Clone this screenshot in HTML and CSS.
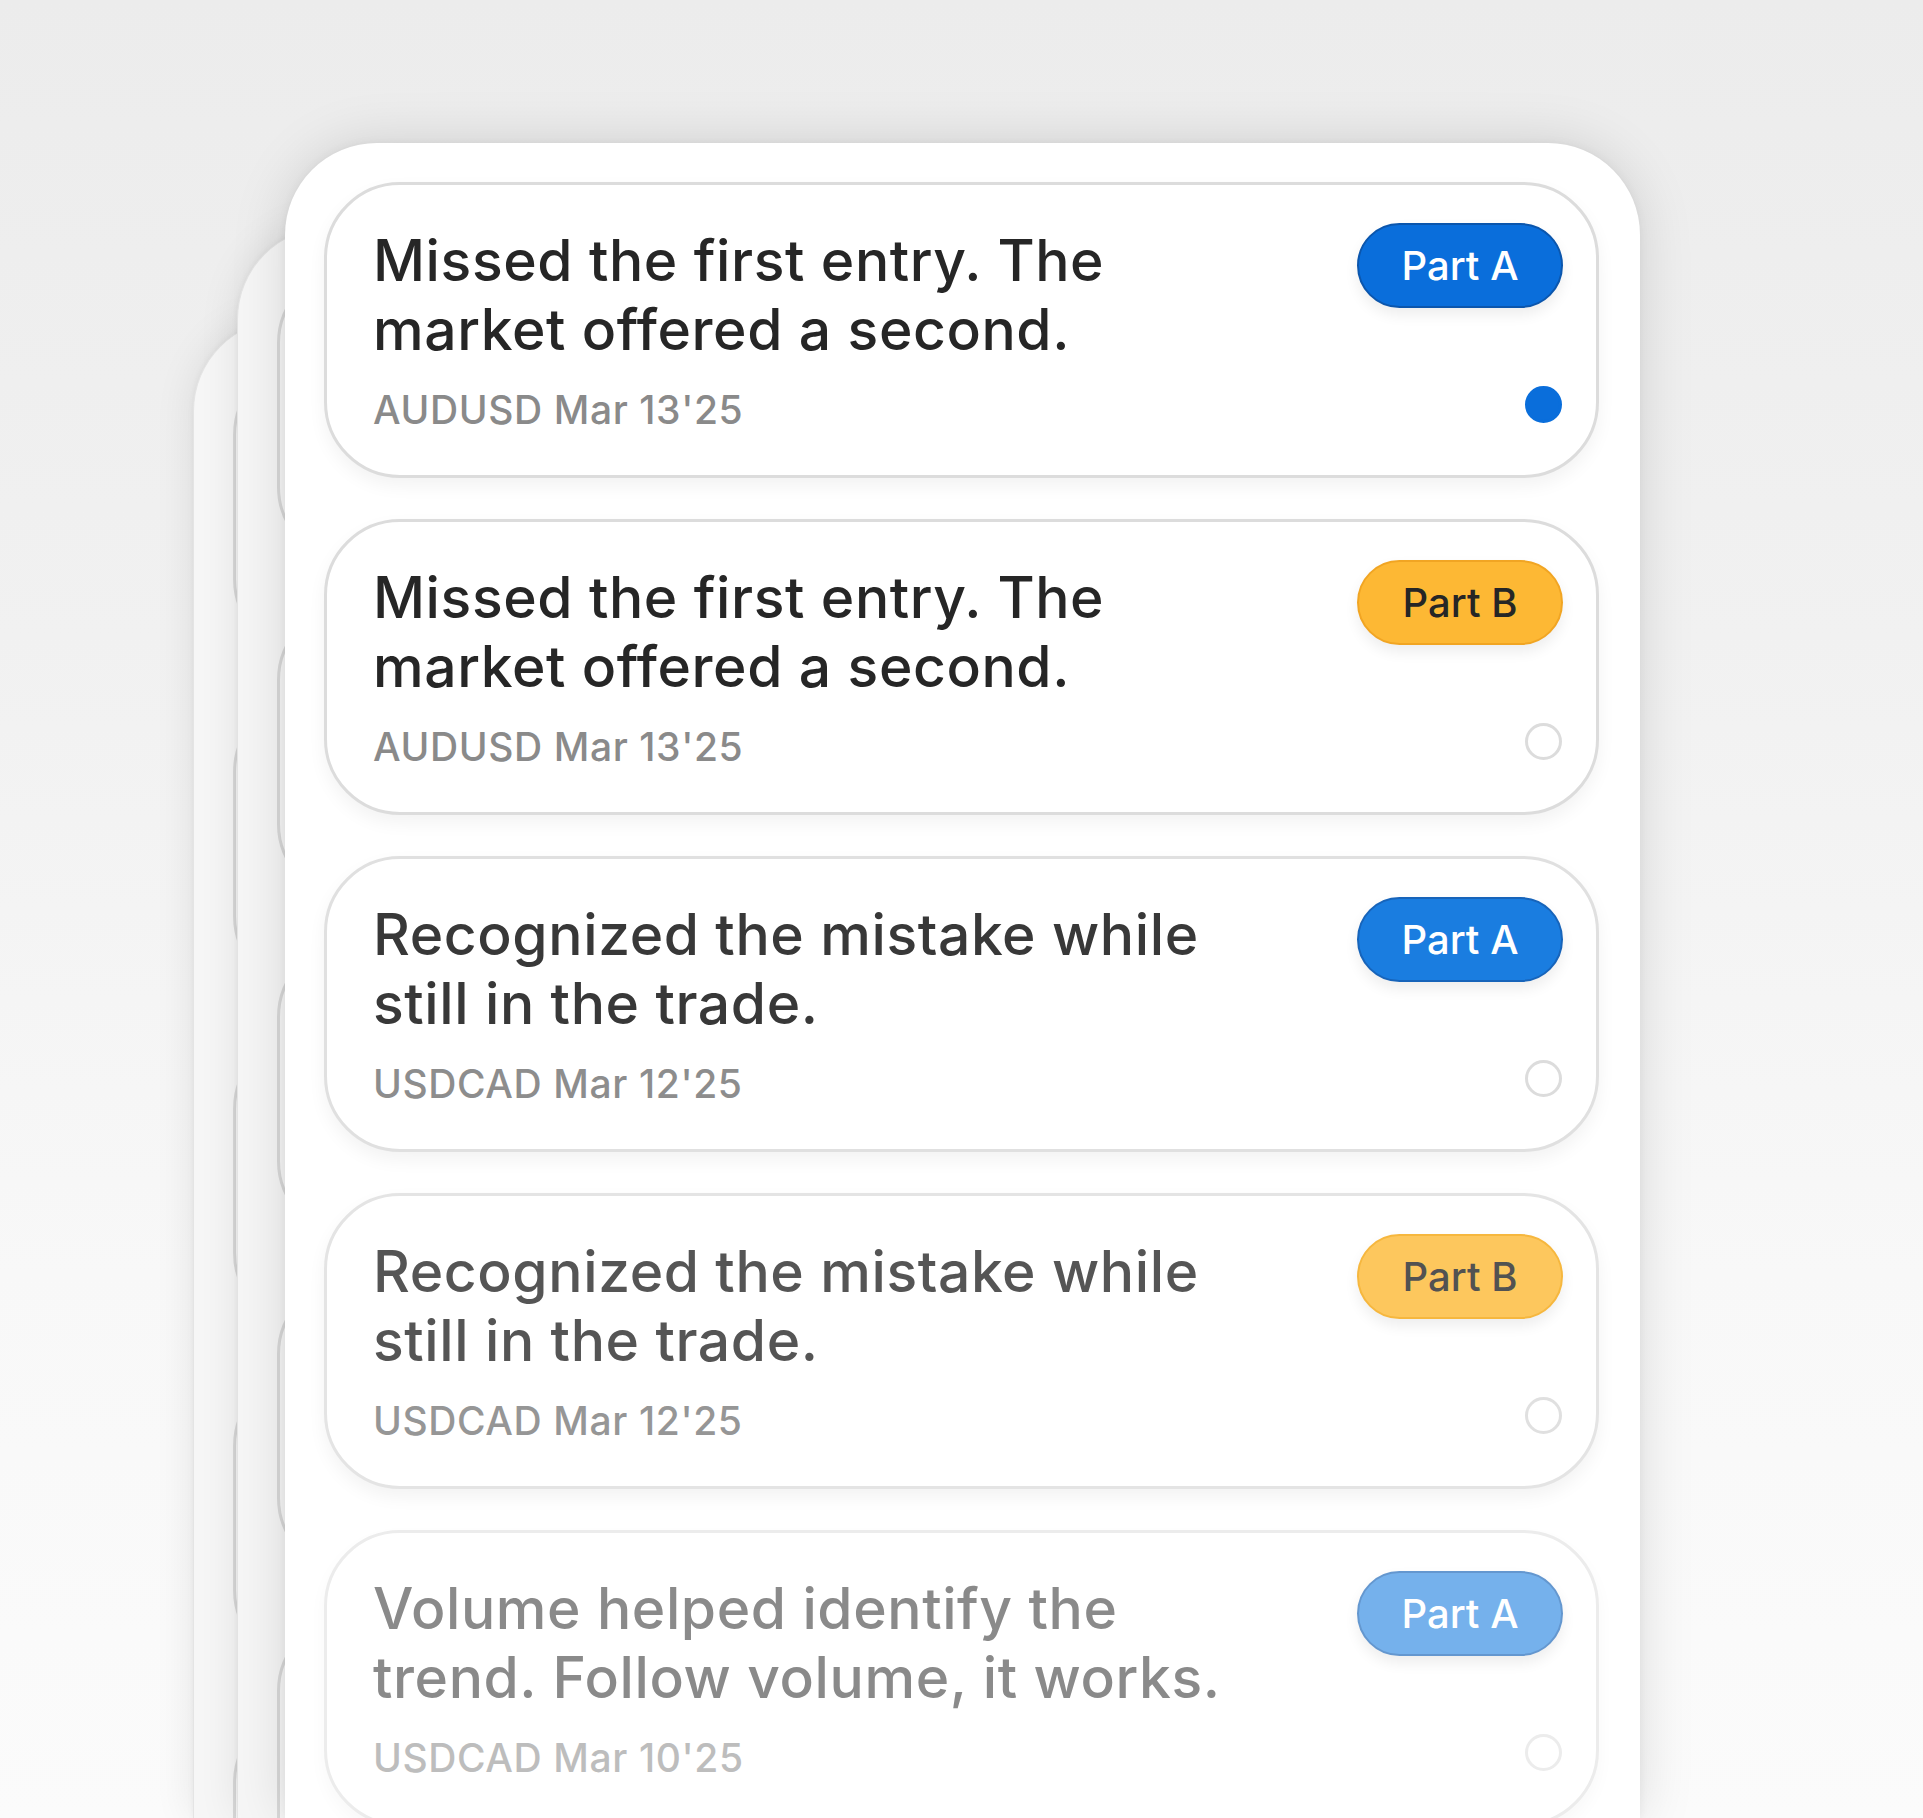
FILE: index.html
```html
<!DOCTYPE html>
<html lang="en">
<head>
<meta charset="utf-8">
<title>Review list</title>
<link rel="stylesheet" href="styles.css">
</head>
<body>
<div class="stage">
  <div class="ghost ghost-back">
    <div class="ghost-card"></div><div class="ghost-card"></div><div class="ghost-card"></div><div class="ghost-card"></div><div class="ghost-card"></div>
  </div>
  <div class="ghost ghost-mid">
    <div class="ghost-card"></div><div class="ghost-card"></div><div class="ghost-card"></div><div class="ghost-card"></div><div class="ghost-card"></div>
  </div>
  <main class="panel">
    <article class="card tone-1">
      <div class="card-text">
        <h2 class="title">Missed the first entry. The market offered a second.</h2>
        <p class="meta">AUDUSD Mar 13'25</p>
      </div>
      <div class="card-side">
        <span class="badge badge-a">Part A</span>
        <span class="dot dot-on"></span>
      </div>
    </article>
    <article class="card tone-1">
      <div class="card-text">
        <h2 class="title">Missed the first entry. The market offered a second.</h2>
        <p class="meta">AUDUSD Mar 13'25</p>
      </div>
      <div class="card-side">
        <span class="badge badge-b">Part B</span>
        <span class="dot"></span>
      </div>
    </article>
    <article class="card tone-2">
      <div class="card-text">
        <h2 class="title">Recognized the mistake while still in the trade.</h2>
        <p class="meta">USDCAD Mar 12'25</p>
      </div>
      <div class="card-side">
        <span class="badge badge-a">Part A</span>
        <span class="dot"></span>
      </div>
    </article>
    <article class="card tone-3">
      <div class="card-text">
        <h2 class="title">Recognized the mistake while still in the trade.</h2>
        <p class="meta">USDCAD Mar 12'25</p>
      </div>
      <div class="card-side">
        <span class="badge badge-b">Part B</span>
        <span class="dot"></span>
      </div>
    </article>
    <article class="card tone-4">
      <div class="card-text">
        <h2 class="title">Volume helped identify the trend. Follow volume, it works.</h2>
        <p class="meta">USDCAD Mar 10'25</p>
      </div>
      <div class="card-side">
        <span class="badge badge-a">Part A</span>
        <span class="dot"></span>
      </div>
    </article>
  </main>
</div>
</body>
</html>
```

FILE: styles.css
```css
* { box-sizing: border-box; }

html, body {
  margin: 0;
  padding: 0;
}

body {
  width: 1923px;
  height: 1818px;
  overflow: hidden;
  font-family: "Inter", "Noto Sans", "Liberation Sans", sans-serif;
  background: linear-gradient(180deg, #ececec 0%, #f1f1f1 35%, #f8f8f8 70%, #fbfbfb 100%);
}

.stage {
  position: relative;
  height: 1818px;
  overflow: hidden;
  padding: 143px 0 0 285px;
}

/* stacked panels behind the front list */
.ghost {
  position: absolute;
  width: 1355px;
  padding: 39px 41px 0 39px;
  border-radius: 92px 92px 0 0;
  background: #f6f6f6;
  border: 1px solid #e4e4e4;
  border-bottom: none;
  box-shadow: 0 0 40px rgba(0, 0, 0, 0.09), 0 0 6px rgba(0, 0, 0, 0.05);
  display: flex;
  flex-direction: column;
  gap: 41px;
  overflow: hidden;
}

.ghost-mid { left: 237px; top: 227px; height: 1591px; z-index: 1; }
.ghost-back { left: 193px; top: 319px; height: 1499px; z-index: 0; }

.ghost-card {
  height: 296px;
  border-radius: 76px;
  border: 3px solid #d9d9d9;
  background: #f8f8f8;
  flex: none;
}

.panel {
  position: relative;
  z-index: 2;
  width: 1355px;
  height: 1675px;
  padding: 39px 41px 0 39px;
  border-radius: 92px 92px 0 0;
  background: #ffffff;
  box-shadow: 0 0 55px rgba(0, 0, 0, 0.13), 0 0 10px rgba(0, 0, 0, 0.06);
  display: flex;
  flex-direction: column;
  gap: 41px;
  overflow: hidden;
}

.card {
  height: 296px;
  flex: none;
  display: flex;
  justify-content: space-between;
  padding: 42px 33px 42px 46px;
  border-radius: 76px;
  border: 3px solid #dcdcdc;
  background: #ffffff;
  box-shadow: 0 8px 18px rgba(0, 0, 0, 0.05);
}

.card-text {
  width: 880px;
  display: flex;
  flex-direction: column;
  gap: 22px;
}

.title {
  margin: 0;
  font-size: 57px;
  line-height: 68.5px;
  font-weight: 500;
  color: #262626;
  letter-spacing: 0.6px;
}

.meta {
  margin: 0;
  font-size: 39px;
  line-height: 47px;
  font-weight: 500;
  color: #8a8a8a;
  letter-spacing: 0.6px;
}

.card-side {
  display: flex;
  flex-direction: column;
  align-items: flex-end;
  justify-content: space-between;
  margin-top: -4px;
  padding-bottom: 10px;
}

.badge {
  width: 206px;
  height: 85px;
  border-radius: 43px;
  border: 2px solid transparent;
  display: flex;
  align-items: center;
  justify-content: center;
  font-size: 40px;
  font-weight: 500;
  box-shadow: 0 7px 14px rgba(0, 0, 0, 0.07);
}

.badge-a {
  background: #0a6edb;
  border-color: #0b56ad;
  color: #ffffff;
}

.badge-b {
  background: #fdb834;
  border-color: #f1a523;
  color: #262626;
}

.dot {
  width: 37px;
  height: 37px;
  border-radius: 50%;
  border: 3px solid #dcdcdc;
  margin-right: 1px;
}

.dot-on {
  background: #0a6edb;
  border-color: #0a6edb;
}

/* progressive fading of later rows */
.tone-2 .title { color: #383838; }
.tone-2 .meta { color: #8d8d8d; }
.tone-2 { border-color: #e0e0e0; }
.tone-2 .badge-a { background: #1a7de0; border-color: #1764ba; }

.tone-3 .title { color: #555555; }
.tone-3 .meta { color: #969696; }
.tone-3 { border-color: #e4e4e4; }
.tone-3 .badge-b { background: #fdc75d; border-color: #f6b73e; color: #525252; }
.tone-3 .dot { border-color: #e0e0e0; }

.tone-4 .title { color: #8a8a8a; }
.tone-4 .meta { color: #bdbdbd; }
.tone-4 { border-color: #ececec; box-shadow: 0 8px 18px rgba(0, 0, 0, 0.03); }
.tone-4 .badge-a { background: #75b1ec; border-color: #6497cf; }
.tone-4 .dot { border-color: #ececec; }
```
